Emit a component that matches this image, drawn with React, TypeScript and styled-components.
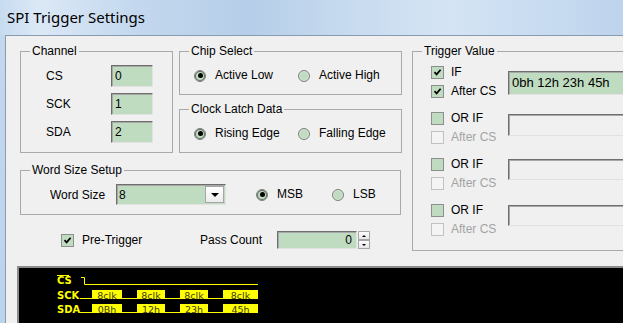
import React from 'react';
import styled, { createGlobalStyle } from 'styled-components';

const GREEN = '#c0dcc0';
const UI_FONT = '"Liberation Sans", Arial, sans-serif';

const GlobalStyle = createGlobalStyle`
	html, body {
		margin: 0;
		padding: 0;
		overflow: hidden;
		background: #f0f0f0;
	}
	body {
		font-family: ${UI_FONT};
		font-size: 12px;
		color: #000;
	}
`;

const Window = styled.div`
	width: 623px;
	height: 323px;
	display: flex;
	flex-direction: column;
	overflow: hidden;
	background: linear-gradient(180deg, #c4d8ee 0%, #bcd3ec 100%);
`;

const TitleBar = styled.div`
	height: 35px;
	flex: none;
	display: flex;
	align-items: center;
	padding-left: 7px;
	background: linear-gradient(
		90deg,
		#c7dbf0 0%,
		#dbe8f6 6%,
		#c3d8ee 22%,
		#b6cee9 40%,
		#c9dcf0 58%,
		#d4e4f4 72%,
		#bed4ed 100%
	);
`;

const Title = styled.span`
	font-family: 'Noto Sans', 'Open Sans', sans-serif;
	font-size: 15px;
	color: #000;
	padding-bottom: 1px;
`;

const Body = styled.div`
	flex: 1;
	display: flex;
	padding-left: 5px;
	min-height: 0;
`;

const Client = styled.div`
	flex: 1;
	display: flex;
	flex-direction: column;
	background: #f0f0f0;
	border-top: 1px solid #8a9bb0;
	border-left: 1px solid #8a9bb0;
	padding: 8px 0 0 11px;
	min-width: 0;
	overflow: hidden;
`;

const MainRow = styled.div`
	display: flex;
	align-items: flex-start;
	gap: 10px;
	padding-left: 3px;
`;

const LeftCol = styled.div`
	width: 382px;
	flex: none;
	display: flex;
	flex-direction: column;
`;

const TopRow = styled.div`
	display: flex;
	gap: 6px;
`;

const MidCol = styled.div`
	display: flex;
	flex-direction: column;
	gap: 7px;
`;

const Group = styled.fieldset<{ $w: number; $h: number; $mt?: number }>`
	margin: ${(p) => p.$mt ?? 0}px 0 0 0;
	padding: 0;
	min-width: 0;
	box-sizing: border-box;
	flex: none;
	width: ${(p) => p.$w}px;
	height: ${(p) => p.$h}px;
	border: 1px solid #a9a9a9;
`;

const Legend = styled.legend`
	margin-left: 9px;
	padding: 0 2px;
	font-size: 12px;
	line-height: 14px;
`;

const ChannelGrid = styled.div`
	display: grid;
	grid-template-columns: 65px 42px;
	row-gap: 6px;
	align-items: center;
	margin-top: 7px;
	padding-left: 25px;
`;

const sunken = `
	box-sizing: border-box;
	border: 1px solid;
	border-color: #6e6e6e #e2e2e2 #e2e2e2 #6e6e6e;
	box-shadow: inset 1px 1px 0 #a8a8a8;
`;

const Field = styled.div<{ $w: number; $h: number; $align?: string; $bg?: string; $size?: number }>`
	${sunken}
	width: ${(p) => p.$w}px;
	height: ${(p) => p.$h}px;
	background: ${(p) => p.$bg ?? GREEN};
	display: flex;
	align-items: center;
	justify-content: ${(p) => p.$align ?? 'flex-start'};
	padding: 0 4px 0 3px;
	font-size: ${(p) => p.$size ?? 12}px;
	line-height: 14px;
`;

const RadioRow = styled.div`
	display: flex;
	margin-top: 11px;
	padding-left: 14px;
`;

const Option = styled.label<{ $w?: number; $gap?: number; $off?: boolean }>`
	display: flex;
	align-items: center;
	gap: ${(p) => p.$gap ?? 9}px;
	width: ${(p) => (p.$w ? `${p.$w}px` : 'auto')};
	flex: none;
	line-height: 13px;
	height: 13px;
	color: ${(p) => (p.$off ? '#a3a3a3' : '#000')};
	white-space: nowrap;
`;

const RadioDot = styled.span<{ $on?: boolean }>`
	width: 12px;
	height: 12px;
	box-sizing: border-box;
	border-radius: 50%;
	border: 1px solid #7f7f7f;
	background: ${GREEN};
	box-shadow: ${(p) => (p.$on ? 'inset 0 0 0 1px #5e6a5e' : 'inset 0 0 0 1px #d6e8d6')};
	display: inline-flex;
	align-items: center;
	justify-content: center;
	flex: none;
	&::after {
		content: '';
		width: 5px;
		height: 5px;
		border-radius: 50%;
		background: ${(p) => (p.$on ? '#000' : 'transparent')};
	}
`;

const CheckBox = styled.span<{ $off?: boolean }>`
	width: 13px;
	height: 13px;
	box-sizing: border-box;
	border: 1px solid ${(p) => (p.$off ? '#c2c2c2' : '#8e8e8e')};
	background: ${(p) => (p.$off ? '#f4f4f4' : GREEN)};
	display: inline-flex;
	align-items: center;
	justify-content: center;
	flex: none;
`;

const Check = ({ on, off }: { on?: boolean; off?: boolean }) => (
	<CheckBox $off={off}>
		{on && (
			<svg width='9' height='9' viewBox='0 0 9 9'>
				<path d='M1.5 4.2 L3.6 6.4 L7.6 1.8' fill='none' stroke='#000' strokeWidth='1.7' />
			</svg>
		)}
	</CheckBox>
);

const WordRow = styled.div`
	display: flex;
	align-items: center;
	margin-top: 7px;
	padding-left: 29px;
`;

const WordLabel = styled.span`
	width: 66px;
	flex: none;
`;

const Combo = styled.div`
	${sunken}
	width: 110px;
	height: 21px;
	background: ${GREEN};
	display: flex;
	align-items: center;
	padding-left: 2px;
	margin-right: 30px;
	flex: none;
`;

const ComboValue = styled.span`
	flex: 1;
`;

const ComboButton = styled.span`
	width: 19px;
	height: 17px;
	box-sizing: border-box;
	margin-right: 1px;
	border: 1px solid #a6a6a6;
	background: linear-gradient(180deg, #ffffff 0%, #ececec 100%);
	display: flex;
	align-items: center;
	justify-content: center;
	&::after {
		content: '';
		border-left: 4px solid transparent;
		border-right: 4px solid transparent;
		border-top: 4px solid #000;
	}
`;

const PassRow = styled.div`
	display: flex;
	align-items: center;
	margin-top: 16px;
	padding-left: 41px;
	height: 18px;
`;

const PassLabel = styled.span`
	width: 77px;
	flex: none;
`;

const Spin = styled.div`
	display: flex;
	height: 18px;
`;

const SpinButtons = styled.div`
	display: flex;
	flex-direction: column;
	width: 12px;
	margin-left: 1px;
`;

const SpinBtn = styled.span<{ $up?: boolean }>`
	height: 9px;
	box-sizing: border-box;
	border: 1px solid #a6a6a6;
	background: linear-gradient(180deg, #fdfdfd, #e6e6e6);
	display: flex;
	align-items: center;
	justify-content: center;
	&::after {
		content: '';
		border-left: 2px solid transparent;
		border-right: 2px solid transparent;
		${(p) => (p.$up ? 'border-bottom: 2px solid #000;' : 'border-top: 2px solid #000;')}
	}
`;

const TriggerList = styled.div`
	display: flex;
	flex-direction: column;
	gap: 14px;
	padding: 8px 0 0 18px;
`;

const TriggerRow = styled.div`
	display: flex;
	align-items: flex-start;
`;

const TriggerChecks = styled.div`
	display: flex;
	flex-direction: column;
	gap: 6px;
	width: 77px;
	flex: none;
`;

const ValueBox = styled(Field)<{ $top: number }>`
	margin-top: ${(p) => p.$top}px;
	flex: none;
`;

const Scope = styled.div`
	margin-top: 15px;
	height: 70px;
	flex: none;
	background: #000;
	border-top: 2px solid #8c8c8c;
	border-left: 2px solid #8c8c8c;
`;

const Wave = styled.svg`
	display: block;
	font-family: 'DejaVu Sans', sans-serif;
`;

const boxes = [
	{ x: 92, w: 30 },
	{ x: 137, w: 28 },
	{ x: 180, w: 28 },
	{ x: 223, w: 35 },
];

const WaveRow = ({ label, y, texts }: { label: string; y: number; texts: string[] }) => (
	<g>
		<text x='57' y={y} fill='#ffff00' fontSize='10' fontWeight='bold'>
			{label}
		</text>
		<line x1='80' y1={y - 0.5} x2='258' y2={y - 0.5} stroke='#ffff00' strokeWidth='1' />
		{boxes.map((b, i) => (
			<g key={i}>
				<rect x={b.x} y={y - 9} width={b.w} height='9' fill='#ffff00' />
				<text
					x={b.x + b.w / 2}
					y={y - 0.5}
					fill='#3a3a1a'
					fontSize='9.5'
					textAnchor='middle'
				>
					{texts[i]}
				</text>
			</g>
		))}
	</g>
);

const Waveform = () => (
	<Wave width='320' height='60' viewBox='19 268 320 60'>
		<text x='57' y='284' fill='#ffff00' fontSize='10' fontWeight='bold'>
			CS
		</text>
		<line x1='57' y1='275.5' x2='69' y2='275.5' stroke='#ffff00' strokeWidth='1' />
		<polyline
			points='81,277.5 84.5,277.5 84.5,284.5 258,284.5'
			fill='none'
			stroke='#ffff00'
			strokeWidth='1'
		/>
		<WaveRow label='SCK' y={299} texts={['8clk', '8clk', '8clk', '8clk']} />
		<WaveRow label='SDA' y={313} texts={['0Bh', '12h', '23h', '45h']} />
	</Wave>
);

const triggers = [
	{ first: 'IF', checked: true, after: true, value: '0bh 12h 23h 45h', top: 5, h: 24 },
	{ first: 'OR IF', checked: false, after: false, value: '', top: 2, h: 22 },
	{ first: 'OR IF', checked: false, after: false, value: '', top: 1, h: 21 },
	{ first: 'OR IF', checked: false, after: false, value: '', top: 1, h: 21 },
];

export default function App() {
	return (
		<>
			<GlobalStyle />
			<Window>
				<TitleBar>
					<Title>SPI Trigger Settings</Title>
				</TitleBar>
				<Body>
					<Client>
						<MainRow>
							<LeftCol>
								<TopRow>
									<Group $w={153} $h={109}>
										<Legend>Channel</Legend>
										<ChannelGrid>
											<span>CS</span>
											<Field $w={42} $h={22}>0</Field>
											<span>SCK</span>
											<Field $w={42} $h={22}>1</Field>
											<span>SDA</span>
											<Field $w={42} $h={22}>2</Field>
										</ChannelGrid>
									</Group>
									<MidCol>
										<Group $w={223} $h={51}>
											<Legend>Chip Select</Legend>
											<RadioRow>
												<Option $w={104}>
													<RadioDot $on />
													Active Low
												</Option>
												<Option>
													<RadioDot />
													Active High
												</Option>
											</RadioRow>
										</Group>
										<Group $w={223} $h={51}>
											<Legend>Clock Latch Data</Legend>
											<RadioRow>
												<Option $w={104}>
													<RadioDot $on />
													Rising Edge
												</Option>
												<Option>
													<RadioDot />
													Falling Edge
												</Option>
											</RadioRow>
										</Group>
									</MidCol>
								</TopRow>
								<Group $w={381} $h={52} $mt={10}>
									<Legend>Word Size Setup</Legend>
									<WordRow>
										<WordLabel>Word Size</WordLabel>
										<Combo>
											<ComboValue>8</ComboValue>
											<ComboButton />
										</Combo>
										<Option $w={76}>
											<RadioDot $on />
											MSB
										</Option>
										<Option>
											<RadioDot />
											LSB
										</Option>
									</WordRow>
								</Group>
								<PassRow>
									<Option $w={139} $gap={8}>
										<Check on />
										Pre-Trigger
									</Option>
									<PassLabel>Pass Count</PassLabel>
									<Spin>
										<Field $w={80} $h={18} $align='flex-end'>
											0
										</Field>
										<SpinButtons>
											<SpinBtn $up />
											<SpinBtn />
										</SpinButtons>
									</Spin>
								</PassRow>
							</LeftCol>
							<Group $w={240} $h={207}>
								<Legend>Trigger Value</Legend>
								<TriggerList>
									{triggers.map((t, i) => (
										<TriggerRow key={i}>
											<TriggerChecks>
												<Option $gap={7}>
													<Check on={t.checked} />
													{t.first}
												</Option>
												<Option $gap={7} $off={!t.checked}>
													<Check on={t.after} off={!t.checked} />
													After CS
												</Option>
											</TriggerChecks>
											<ValueBox
												$w={140}
												$h={t.h}
												$top={t.top}
												$size={13}
												$bg={t.checked ? GREEN : '#f0f0f0'}
											>
												{t.value}
											</ValueBox>
										</TriggerRow>
									))}
								</TriggerList>
							</Group>
						</MainRow>
						<Scope>
							<Waveform />
						</Scope>
					</Client>
				</Body>
			</Window>
		</>
	);
}
